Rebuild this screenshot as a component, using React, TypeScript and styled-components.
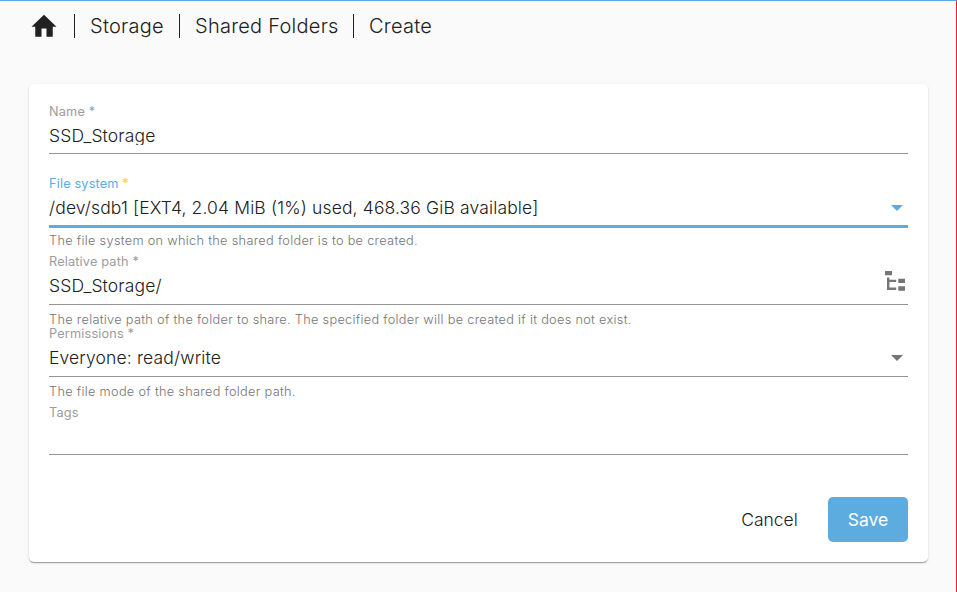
import React from "react";
import styled, { createGlobalStyle } from "styled-components";

const Global = createGlobalStyle`
  * { box-sizing: border-box; }
  html, body { margin: 0; height: 100%; }
  body { background: #fafafa; font-family: Inter, "Liberation Sans", sans-serif; font-weight: 300; color: #212121; overflow: hidden; }
`;

const Page = styled.div`
  width: 957px;
  height: 592px;
  border-top: 1px solid #5dacdf;
  border-right: 1px solid #ee1c2e;
  background: #fafafa;
`;

const Breadcrumb = styled.nav`
  display: flex;
  align-items: center;
  height: 50px;
  padding-left: 29px;
  font-size: 20px;
  line-height: 24px;
  letter-spacing: 0.25px;
`;

const HomeIcon = styled.svg`
  width: 30px;
  height: 30px;
  margin-right: 15px;
  fill: #212121;
`;

const Crumb = styled.span<{ $width: number }>`
  width: ${(p) => p.$width}px;
  white-space: nowrap;
`;

const Divider = styled.span`
  width: 1px;
  height: 24px;
  margin-right: 15px;
  background: #212121;
`;

const Card = styled.form`
  width: 899px;
  height: 478px;
  margin: 33px 0 0 29px;
  padding: 20px;
  border-radius: 5px;
  background: #fff;
  box-shadow: 0 2px 1px -1px rgba(0, 0, 0, 0.2), 0 1px 1px rgba(0, 0, 0, 0.14), 0 1px 3px rgba(0, 0, 0, 0.12);
`;

const FieldBox = styled.div<{ $height: number }>`
  display: flex;
  flex-direction: column;
  height: ${(p) => p.$height}px;
`;

const Label = styled.label<{ $active?: boolean }>`
  height: 16px;
  font-size: 12.75px;
  line-height: 16px;
  letter-spacing: 0.15px;
  font-weight: 400;
  color: ${(p) => (p.$active ? "#5dacdf" : "#9c9c9c")};
`;

const Required = styled.span<{ $active?: boolean }>`
  font-weight: ${(p) => (p.$active ? 600 : 400)};
  color: ${(p) => (p.$active ? "#fddb1b" : "inherit")};
`;

const Control = styled.div<{ $height: number; $active?: boolean }>`
  display: flex;
  flex: none;
  align-items: flex-start;
  justify-content: space-between;
  height: ${(p) => p.$height + (p.$active ? 3 : 1)}px;
  padding-top: 4px;
  border-bottom: ${(p) => (p.$active ? "3px solid #5dacdf" : "1px solid #949494")};
`;

const Value = styled.span<{ $clipped?: boolean }>`
  height: ${(p) => (p.$clipped ? 21 : 24)}px;
  overflow: hidden;
  font-size: 17.5px;
  line-height: 24px;
  letter-spacing: 0.14px;
  white-space: nowrap;
`;

const Arrow = styled.svg<{ $active?: boolean }>`
  width: 12px;
  height: 6px;
  margin: 9px 5px 0 0;
  fill: ${(p) => (p.$active ? "#5dacdf" : "#757575")};
`;

const TreeIcon = styled.svg`
  width: 20px;
  height: 20px;
  margin: -3px 3px 0 0;
  fill: #757575;
`;

const Hint = styled.div<{ $offset: number }>`
  margin-top: ${(p) => p.$offset}px;
  font-size: 12.75px;
  line-height: 16px;
  letter-spacing: 0.3px;
  white-space: nowrap;
  color: #747474;
`;

const Actions = styled.div`
  display: flex;
  justify-content: flex-end;
  gap: 10px;
`;

const Button = styled.button<{ $primary?: boolean }>`
  width: ${(p) => (p.$primary ? 80 : 97)}px;
  height: 45px;
  padding: 0;
  border: 0;
  border-radius: 5px;
  font: 300 17.5px/45px Inter, sans-serif;
  font-weight: ${(p) => (p.$primary ? 400 : 300)};
  color: ${(p) => (p.$primary ? "#fff" : "#212121")};
  background: ${(p) => (p.$primary ? "#5dacdf" : "transparent")};
`;

interface FieldProps {
  label: string;
  value?: string;
  hint?: string;
  hintOffset?: number;
  required?: boolean;
  active?: boolean;
  clipped?: boolean;
  height: number;
  controlHeight?: number;
  icon?: React.ReactNode;
}

function Field({ label, value, hint, hintOffset = 7, required = true, active, clipped, height, controlHeight = 34, icon }: FieldProps) {
  return (
    <FieldBox $height={height}>
      <Label $active={active}>
        {label}
        {required && <Required $active={active}> *</Required>}
      </Label>
      <Control $height={controlHeight} $active={active}>
        <Value $clipped={clipped}>{value}</Value>
        {icon}
      </Control>
      {hint && <Hint $offset={hintOffset}>{hint}</Hint>}
    </FieldBox>
  );
}

const DropArrow = ({ active }: { active?: boolean }) => (
  <Arrow $active={active} viewBox="0 0 12 6"><path d="M0 0h12L6 6z" /></Arrow>
);

export default function App() {
  return (
    <Page>
      <Global />
      <Breadcrumb>
        <HomeIcon viewBox="0 0 24 24"><path d="M10 20.5v-6.5h4v6.5h5v-8h3L12 3 2 12.5h3v8z" /></HomeIcon>
        <Divider />
        <Crumb $width={89}>Storage</Crumb>
        <Divider />
        <Crumb $width={158}>Shared Folders</Crumb>
        <Divider />
        <Crumb $width={70}>Create</Crumb>
      </Breadcrumb>
      <Card>
        <Field label="Name" value="SSD_Storage" clipped height={72} controlHeight={33} />
        <Field
          label="File system"
          value="/dev/sdb1 [EXT4, 2.04 MiB (1%) used, 468.36 GiB available]"
          hint="The file system on which the shared folder is to be created."
          hintOffset={5}
          active
          height={78}
          controlHeight={33}
          icon={<DropArrow active />}
        />
        <Field
          label="Relative path"
          value="SSD_Storage/"
          hint="The relative path of the folder to share. The specified folder will be created if it does not exist."
          height={72}
          icon={
            <TreeIcon viewBox="0 0 20 20">
              <path d="M0 0h7v4.3H0zM13.3 7.7H20V12h-6.7zM13.3 15.3H20v4.4h-6.7zM2 6.5h2.4v2.2h6.8v2.2H4.4v5.7h6.8V19H2z" />
            </TreeIcon>
          }
        />
        <Field label="Permissions" value="Everyone: read/write" hint="The file mode of the shared folder path." height={79} icon={<DropArrow />} />
        <Field label="Tags" required={false} height={92} controlHeight={33} />
        <Actions>
          <Button type="button">Cancel</Button>
          <Button type="button" $primary>Save</Button>
        </Actions>
      </Card>
    </Page>
  );
}
